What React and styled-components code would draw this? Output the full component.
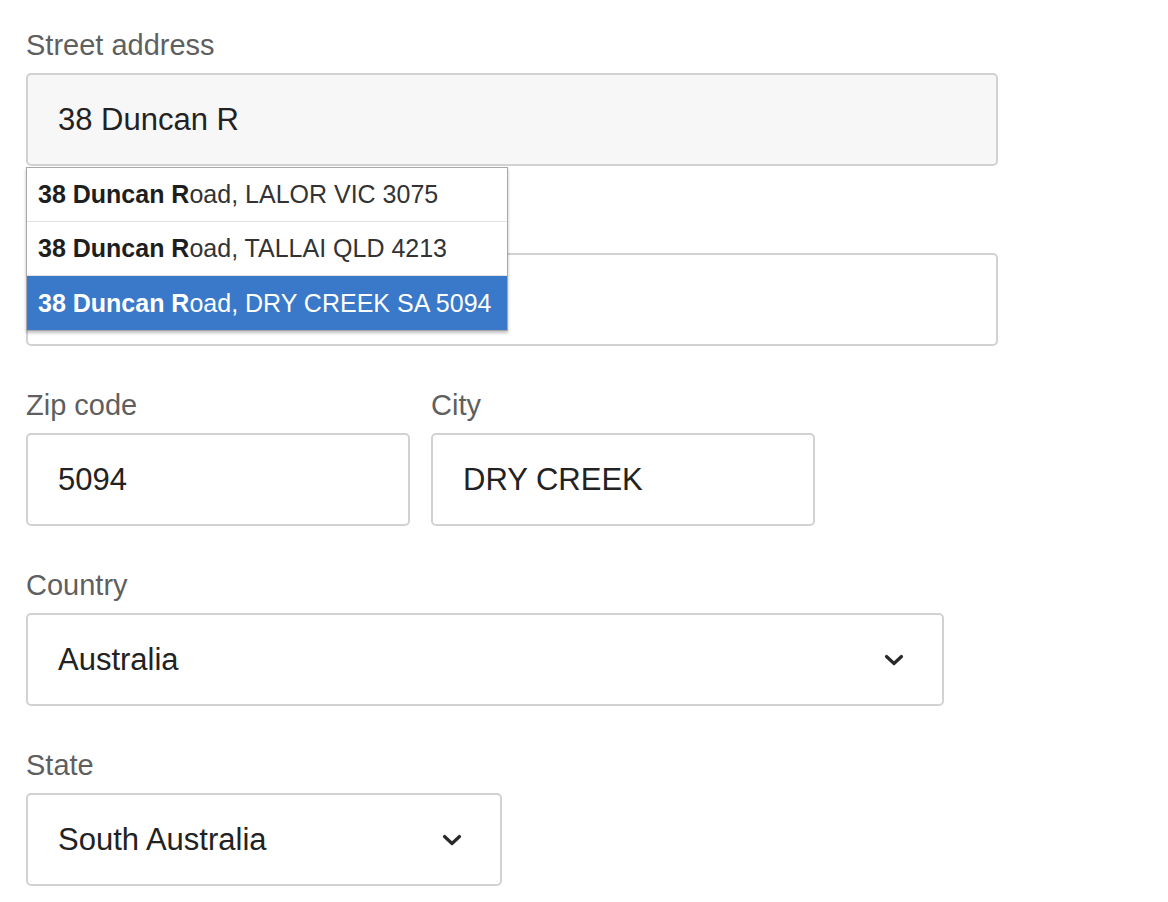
import React from "react";
import styled, { createGlobalStyle } from "styled-components";

const Global = createGlobalStyle`
  html, body { margin: 0; padding: 0; background: #ffffff; }
  body { font-family: "Liberation Sans", Arial, Helvetica, sans-serif; }
  * { box-sizing: border-box; }
`;

const Page = styled.form`
  padding: 29px 0 0 26px;
  display: flex;
  flex-direction: column;
  gap: 43px;
`;

const Field = styled.div`
  display: flex;
  flex-direction: column;
  width: ${(p) => p.$width}px;
`;

const Row = styled.div`
  display: flex;
  gap: 21px;
`;

const Label = styled.label`
  font-size: 29px;
  line-height: 33px;
  height: 33px;
  color: #5f5f5f;
  margin-bottom: 11px;
`;

const InputWrap = styled.div`
  position: relative;
`;

const TextInput = styled.input`
  display: block;
  width: 100%;
  height: 93px;
  padding: 0 30px;
  border: 2px solid #d2d2d2;
  border-radius: 5px;
  background: ${(p) => (p.$filled ? "#f7f7f7" : "#ffffff")};
  font-family: inherit;
  font-size: 31px;
  color: #222222;
  outline: none;
`;

const SelectBox = styled.div`
  height: 93px;
  padding: 0 38px 0 30px;
  border: 2px solid #d2d2d2;
  border-radius: 5px;
  background: #ffffff;
  display: flex;
  align-items: center;
  justify-content: space-between;
  font-size: 31px;
  color: #222222;
`;

const Chevron = styled.svg`
  width: 20px;
  height: 12px;
  flex: none;
`;

const Suggestions = styled.ul`
  position: absolute;
  top: 100%;
  left: 0;
  margin: 1px 0 0;
  padding: 0;
  list-style: none;
  width: 482px;
  background: #ffffff;
  border: 1px solid #a8a8a8;
  box-shadow: 0 2px 3px rgba(0, 0, 0, 0.25);
  z-index: 2;
`;

const Suggestion = styled.li`
  height: 54px;
  display: flex;
  align-items: center;
  padding: 0 11px;
  font-size: 25px;
  white-space: nowrap;
  color: ${(p) => (p.$active ? "#ffffff" : "#333333")};
  background: ${(p) => (p.$active ? "#3a78c9" : "#ffffff")};
  border-bottom: ${(p) => (p.$last ? "none" : "1px solid #e2e2e2")};
  b { font-weight: 700; color: ${(p) => (p.$active ? "#ffffff" : "#1e1e1e")}; }
`;

const ChevronIcon = () => (
  <Chevron viewBox="0 0 20 12">
    <path d="M2.5 2.5 L10 9.5 L17.5 2.5" fill="none" stroke="#2a2a2a" strokeWidth="3.2" strokeLinecap="round" strokeLinejoin="round" />
  </Chevron>
);

const suggestions = [
  "LALOR VIC 3075",
  "TALLAI QLD 4213",
  "DRY CREEK SA 5094",
];

export default function App() {
  return (
    <>
      <Global />
      <Page>
        <Field $width={972}>
          <Label>Street address</Label>
          <InputWrap>
            <TextInput $filled readOnly value="38 Duncan R" />
            <Suggestions>
              {suggestions.map((s, i) => (
                <Suggestion key={s} $active={i === 2} $last={i === suggestions.length - 1}>
                  <b>38 Duncan R</b>oad, {s}
                </Suggestion>
              ))}
            </Suggestions>
          </InputWrap>
        </Field>
        <Field $width={972}>
          <Label aria-hidden="true">{"\u00a0"}</Label>
          <TextInput readOnly value="" aria-label="Address line 2" />
        </Field>
        <Row>
          <Field $width={384}>
            <Label>Zip code</Label>
            <TextInput readOnly value="5094" />
          </Field>
          <Field $width={384}>
            <Label>City</Label>
            <TextInput readOnly value="DRY CREEK" />
          </Field>
        </Row>
        <Field $width={918}>
          <Label>Country</Label>
          <SelectBox>
            <span>Australia</span>
            <ChevronIcon />
          </SelectBox>
        </Field>
        <Field $width={476}>
          <Label>State</Label>
          <SelectBox>
            <span>South Australia</span>
            <ChevronIcon />
          </SelectBox>
        </Field>
      </Page>
    </>
  );
}
